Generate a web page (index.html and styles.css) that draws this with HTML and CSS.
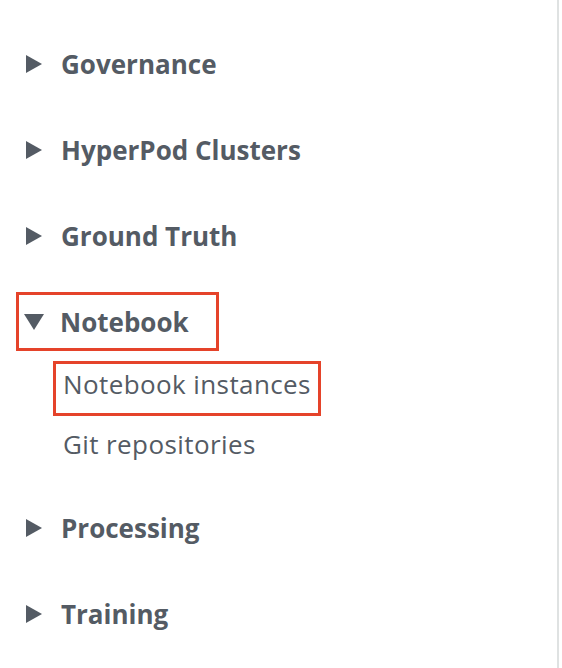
FILE: index.html
```html
<!DOCTYPE html>
<html lang="en">
<head>
<meta charset="utf-8">
<title>Navigation</title>
<link rel="stylesheet" href="styles.css">
</head>
<body>
<nav class="sidenav">
  <div class="section">
    <div class="section-header">
      <svg class="caret" viewBox="0 0 18 18"><polygon points="1,0 17,9 1,18"/></svg>
      <span class="section-title">Governance</span>
    </div>
  </div>
  <div class="section">
    <div class="section-header">
      <svg class="caret" viewBox="0 0 18 18"><polygon points="1,0 17,9 1,18"/></svg>
      <span class="section-title">HyperPod Clusters</span>
    </div>
  </div>
  <div class="section">
    <div class="section-header">
      <svg class="caret" viewBox="0 0 18 18"><polygon points="1,0 17,9 1,18"/></svg>
      <span class="section-title">Ground Truth</span>
    </div>
  </div>
  <div class="section section-open">
    <div class="section-header highlight-header">
      <svg class="caret caret-down" viewBox="0 0 20 18"><polygon points="0,1 20,1 10,17"/></svg>
      <span class="section-title">Notebook</span>
    </div>
    <ul class="sublist">
      <li class="subitem"><span class="highlight-item">Notebook instances</span></li>
      <li class="subitem">Git repositories</li>
    </ul>
  </div>
  <div class="section">
    <div class="section-header">
      <svg class="caret" viewBox="0 0 18 18"><polygon points="1,0 17,9 1,18"/></svg>
      <span class="section-title">Processing</span>
    </div>
  </div>
  <div class="section">
    <div class="section-header">
      <svg class="caret" viewBox="0 0 18 18"><polygon points="1,0 17,9 1,18"/></svg>
      <span class="section-title">Training</span>
    </div>
  </div>
</nav>
</body>
</html>
```
FILE: styles.css
```css
html, body {
  margin: 0;
  padding: 0;
  background: #ffffff;
}

body {
  font-family: "Open Sans", "Noto Sans", "Liberation Sans", sans-serif;
  color: #545b64;
  width: 562px;
  height: 668px;
  overflow: hidden;
}

.sidenav {
  box-sizing: border-box;
  width: 559px;
  height: 668px;
  border-right: 2px solid #dfe2e2;
  padding: 44px 0 0 25px;
  display: flex;
  flex-direction: column;
  gap: 46px;
}

.section-header {
  display: inline-flex;
  align-items: center;
  height: 40px;
  gap: 18px;
  position: relative;
  align-self: flex-start;
}

.caret {
  width: 18px;
  height: 18px;
  fill: #545b64;
  flex: none;
}

.caret-down {
  width: 20px;
  height: 18px;
  margin-left: -1px;
  margin-right: -2px;
}

.section-title {
  font-size: 26px;
  font-weight: 700;
  line-height: 40px;
  letter-spacing: 0;
}

.highlight-header::after {
  content: "";
  position: absolute;
  left: -9px;
  top: -10px;
  right: -30px;
  bottom: -9px;
  border: 3px solid #e5432a;
}

.sublist {
  list-style: none;
  margin: 22px 0 -2px 38px;
  padding: 0;
  display: flex;
  flex-direction: column;
  gap: 20px;
}

.subitem {
  font-size: 26px;
  line-height: 40px;
  height: 40px;
  letter-spacing: 0.4px;
}

.highlight-item {
  position: relative;
  display: inline-block;
}

.highlight-item::after {
  content: "";
  position: absolute;
  left: -10px;
  right: -10px;
  top: -3px;
  bottom: -12px;
  border: 3px solid #e5432a;
}
```
